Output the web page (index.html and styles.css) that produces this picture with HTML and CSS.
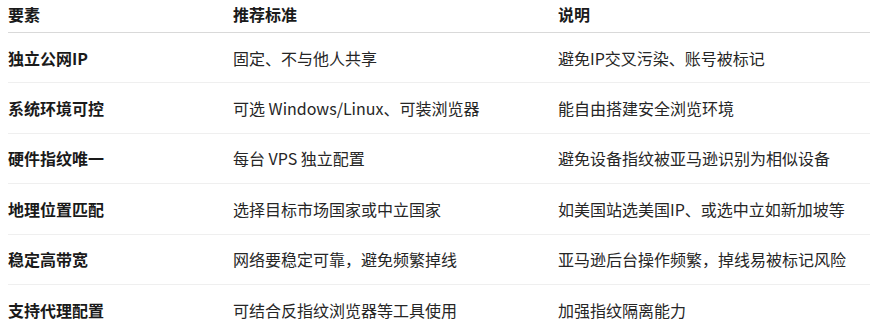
FILE: index.html
```html
<!DOCTYPE html>
<html lang="zh-CN">
<head>
<meta charset="utf-8">
<link rel="stylesheet" href="styles.css">
</head>
<body>
<div class="wrap">
<table class="tbl">
  <thead>
    <tr><th class="c1">要素</th><th class="c2">推荐标准</th><th class="c3">说明</th></tr>
  </thead>
  <tbody>
    <tr><td class="key">独立公网IP</td><td>固定、不与他人共享</td><td>避免IP交叉污染、账号被标记</td></tr>
    <tr><td class="key">系统环境可控</td><td>可选 Windows/Linux、可装浏览器</td><td>能自由搭建安全浏览环境</td></tr>
    <tr><td class="key">硬件指纹唯一</td><td>每台 VPS 独立配置</td><td>避免设备指纹被亚马逊识别为相似设备</td></tr>
    <tr><td class="key">地理位置匹配</td><td>选择目标市场国家或中立国家</td><td>如美国站选美国IP、或选中立如新加坡等</td></tr>
    <tr><td class="key">稳定高带宽</td><td>网络要稳定可靠，避免频繁掉线</td><td>亚马逊后台操作频繁，掉线易被标记风险</td></tr>
    <tr><td class="key">支持代理配置</td><td>可结合反指纹浏览器等工具使用</td><td>加强指纹隔离能力</td></tr>
  </tbody>
</table>
</div>
</body>
</html>
```

FILE: styles.css
```css
html, body {
  margin: 0;
  padding: 0;
  background: #ffffff;
}
body {
  font-family: "Noto Sans CJK SC", "Noto Sans", sans-serif;
  font-size: 16px;
  color: #262626;
  overflow: hidden;
}
.wrap {
  padding-left: 8px;
}
.tbl {
  border-collapse: collapse;
  width: 880px;
  table-layout: fixed;
}
.c1 { width: 225px; }
.c2 { width: 325px; }
.c3 { width: auto; }
th {
  text-align: left;
  font-weight: 700;
  color: #1a1a1a;
  height: 28px;
  padding: 0 0 4px 0;
  line-height: 20px;
  vertical-align: middle;
  border-bottom: 1px solid #d9d9d9;
}
td {
  height: 49.4px;
  padding: 0;
  line-height: 20px;
  vertical-align: middle;
  border-bottom: 1px solid #efefef;
}
tbody tr:last-child td {
  border-bottom: none;
}
td.key {
  font-weight: 700;
  color: #1a1a1a;
}
```
